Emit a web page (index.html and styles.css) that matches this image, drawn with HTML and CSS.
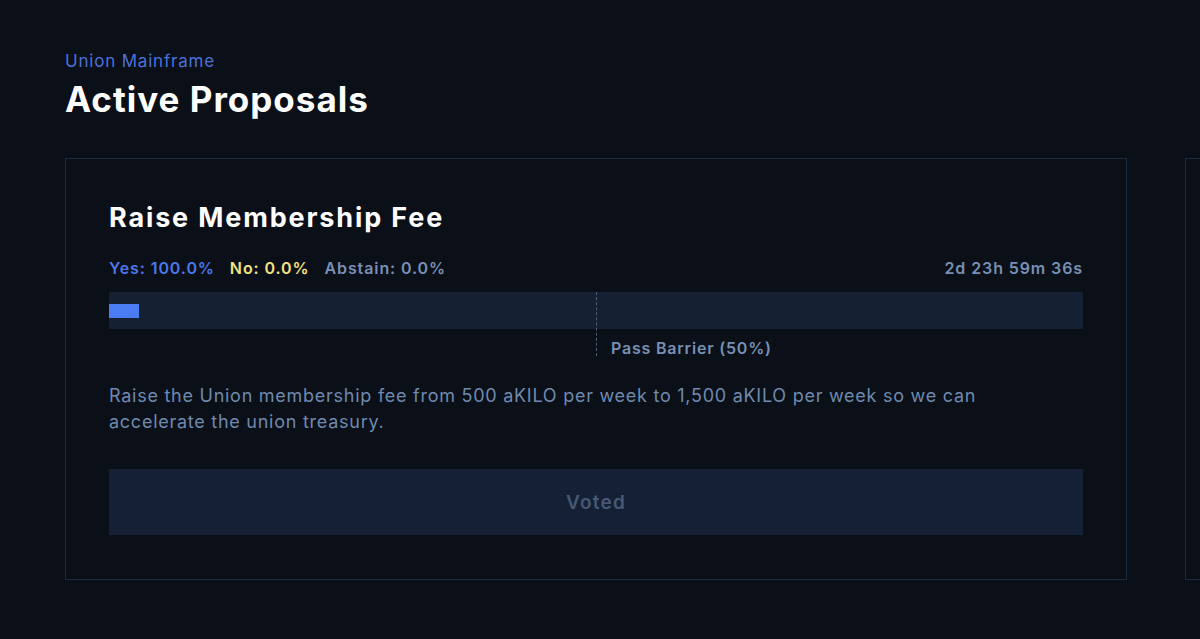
FILE: index.html
```html
<!DOCTYPE html>
<html>
<head>
<meta charset="utf-8">
<link rel="stylesheet" href="styles.css">
</head>
<body>
<main class="page">
  <header class="header">
    <div class="eyebrow">Union Mainframe</div>
    <h1 class="title">Active Proposals</h1>
  </header>
  <div class="cards">
    <section class="card">
      <h2 class="card-title">Raise Membership Fee</h2>
      <div class="stats">
        <div class="votes">
          <span class="yes">Yes: 100.0%</span>
          <span class="no">No: 0.0%</span>
          <span class="abstain">Abstain: 0.0%</span>
        </div>
        <span class="time">2d 23h 59m 36s</span>
      </div>
      <div class="bar-wrap">
        <div class="bar">
          <div class="fill"></div>
        </div>
        <div class="barrier"></div>
        <div class="barrier-label">Pass Barrier (50%)</div>
      </div>
      <p class="desc">Raise the Union membership fee from 500 aKILO per week to 1,500 aKILO per week so we can accelerate the union treasury.</p>
      <button class="voted">Voted</button>
    </section>
    <section class="card card-next"></section>
  </div>
</main>
</body>
</html>
```
FILE: styles.css
```css
html, body {
  margin: 0;
  padding: 0;
  background: #0a0f18;
  overflow: hidden;
}
body {
  font-family: Inter, "Noto Sans", sans-serif;
  color: #ffffff;
  width: 1200px;
  height: 639px;
}
.page {
  padding: 50px 0 0 65px;
  overflow: hidden;
  width: 1135px;
}
.header {
  margin-bottom: 38px;
}
.eyebrow {
  color: #4a72db;
  font-size: 17px;
  line-height: 22px;
  letter-spacing: 0.8px;
}
.title {
  margin: 6px 0 0 0;
  font-size: 35px;
  line-height: 42px;
  font-weight: 700;
  letter-spacing: 1px;
}
.cards {
  display: flex;
  gap: 58px;
}
.card {
  flex: 0 0 auto;
  width: 974px;
  border: 1px solid #1e2a3e;
  padding: 42px 43px 44px 43px;
}
.card-title {
  margin: 0;
  font-size: 27px;
  line-height: 34px;
  font-weight: 700;
  letter-spacing: 1.85px;
}
.stats {
  display: flex;
  justify-content: space-between;
  margin-top: 23px;
  font-size: 16px;
  font-weight: 600;
  line-height: 20px;
  letter-spacing: 0.9px;
}
.votes {
  display: flex;
  gap: 15px;
}
.yes { color: #4b78ea; }
.no { color: #f3e27f; }
.abstain { color: #7890b3; }
.time { color: #7890b3; }
.bar-wrap {
  position: relative;
  margin-top: 14px;
  height: 66px;
}
.bar {
  height: 37px;
  background: #162033;
  display: flex;
  align-items: center;
}
.fill {
  width: 30px;
  height: 14px;
  background: #4a7cf4;
}
.barrier {
  position: absolute;
  left: 487px;
  top: 0;
  height: 64px;
  border-left: 1px dashed #4d5d78;
}
.barrier-label {
  position: absolute;
  left: 502px;
  top: 46px;
  color: #7890b3;
  font-size: 16px;
  font-weight: 600;
  line-height: 20px;
  letter-spacing: 0.8px;
}
.desc {
  margin: 25px 0 0 0;
  color: #6f8aae;
  font-size: 18px;
  line-height: 26px;
  letter-spacing: 0.74px;
  width: 900px;
}
.voted {
  display: block;
  margin-top: 34px;
  width: 100%;
  height: 66px;
  border: none;
  background: #152035;
  color: #475874;
  font-family: Inter, "Noto Sans", sans-serif;
  font-size: 19px;
  font-weight: 600;
  letter-spacing: 1.2px;
}
```
